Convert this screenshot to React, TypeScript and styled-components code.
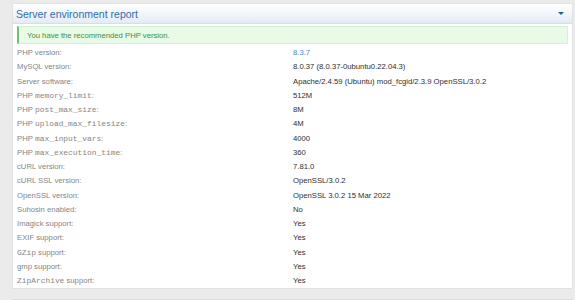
import { Fragment, type ReactNode } from "react";
import styled, { createGlobalStyle } from "styled-components";

const GlobalStyle = createGlobalStyle`
  html, body {
    margin: 0;
    padding: 0;
    background: #ebebeb;
    font-family: "Liberation Sans", Arial, sans-serif;
  }
`;

const Page = styled.div`
  padding: 3px 2px 0 12px;
  height: 300px;
  box-sizing: border-box;
  overflow: hidden;
`;

const Panel = styled.div`
  background: #ffffff;
  border: 1px solid #e2e2e2;
  border-top: none;
  width: 561px;
  box-sizing: border-box;
`;

const Header = styled.div`
  display: flex;
  align-items: center;
  justify-content: space-between;
  height: 21px;
  box-sizing: border-box;
  padding: 0 8px 0 3px;
  background: linear-gradient(to bottom, #ffffff 0%, #f3f7fc 45%, #e2ecf7 100%);
  border-top: 1px solid #dde6f0;
  border-bottom: 1px solid #d3dfec;
`;

const Title = styled.h3`
  margin: 0;
  font-size: 10.5px;
  font-weight: normal;
  color: #2f6bad;
`;

const Caret = styled.span`
  width: 0;
  height: 0;
  border-left: 3px solid transparent;
  border-right: 3px solid transparent;
  border-top: 3px solid #1f5d9c;
`;

const Body = styled.div`
  padding: 2px 4px 1px 4px;
`;

const Alert = styled.div`
  height: 18px;
  display: flex;
  align-items: center;
  box-sizing: border-box;
  padding-left: 8px;
  background: #e8fbe6;
  border: 1px solid #d3f1d0;
  border-left: 2px solid #6cc36c;
  color: #3f8f3f;
  font-size: 7.7px;
`;

const Table = styled.div`
  display: grid;
  grid-template-columns: 276px 1fr;
  margin-top: 1px;
`;

const Cell = styled.div<{ $label?: boolean; $link?: boolean }>`
  height: 14.25px;
  display: flex;
  align-items: center;
  padding-top: 1px;
  box-sizing: border-box;
  font-size: 7.7px;
  white-space: nowrap;
  color: ${(p) => (p.$label ? "#858585" : p.$link ? "#4a88c6" : "#2e2e2e")};
`;

const Code = styled.code`
  font-family: "Liberation Mono", "DejaVu Sans Mono", monospace;
  font-size: 7.9px;
  color: #858585;
`;

const NextPanel = styled.div`
  margin-top: 10px;
  width: 561px;
  border-top: 1px solid #dcdcdc;
`;

type Row = { label: ReactNode; value: string; link?: boolean };

const rows: Row[] = [
  { label: "PHP version:", value: "8.3.7", link: true },
  { label: "MySQL version:", value: "8.0.37 (8.0.37-0ubuntu0.22.04.3)" },
  { label: "Server software:", value: "Apache/2.4.59 (Ubuntu) mod_fcgid/2.3.9 OpenSSL/3.0.2" },
  { label: <>PHP&nbsp;<Code>memory_limit</Code>:</>, value: "512M" },
  { label: <>PHP&nbsp;<Code>post_max_size</Code>:</>, value: "8M" },
  { label: <>PHP&nbsp;<Code>upload_max_filesize</Code>:</>, value: "4M" },
  { label: <>PHP&nbsp;<Code>max_input_vars</Code>:</>, value: "4000" },
  { label: <>PHP&nbsp;<Code>max_execution_time</Code>:</>, value: "360" },
  { label: "cURL version:", value: "7.81.0" },
  { label: "cURL SSL version:", value: "OpenSSL/3.0.2" },
  { label: "OpenSSL version:", value: "OpenSSL 3.0.2 15 Mar 2022" },
  { label: "Suhosin enabled:", value: "No" },
  { label: "Imagick support:", value: "Yes" },
  { label: "EXIF support:", value: "Yes" },
  { label: <><Code>GZip</Code>&nbsp;support:</>, value: "Yes" },
  { label: "gmp support:", value: "Yes" },
  { label: <><Code>ZipArchive</Code>&nbsp;support:</>, value: "Yes" },
];

export default function App() {
  return (
    <>
      <GlobalStyle />
      <Page>
        <Panel>
          <Header>
            <Title>Server environment report</Title>
            <Caret />
          </Header>
          <Body>
            <Alert>You have the recommended PHP version.</Alert>
            <Table>
              {rows.map((r, i) => (
                <Fragment key={i}>
                  <Cell $label>{r.label}</Cell>
                  <Cell $link={r.link}>{r.value}</Cell>
                </Fragment>
              ))}
            </Table>
          </Body>
        </Panel>
        <NextPanel />
      </Page>
    </>
  );
}
